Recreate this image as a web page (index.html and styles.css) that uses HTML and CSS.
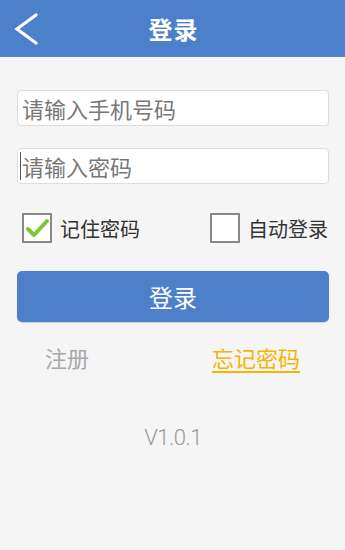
FILE: index.html
```html
<!DOCTYPE html>
<html lang="zh">
<head>
<meta charset="utf-8">
<link rel="stylesheet" href="styles.css">
</head>
<body>
<div class="app">
  <header class="bar">
    <svg class="back" width="28" height="34" viewBox="0 0 28 34">
      <path d="M24 3 L5 17 L24 31" fill="none" stroke="#fff" stroke-width="3.2" stroke-linecap="round" stroke-linejoin="miter"/>
    </svg>
    <h1 class="title">登录</h1>
  </header>
  <main class="content">
    <div class="field"><span class="ph">请输入手机号码</span></div>
    <div class="field"><span class="caret"></span><span class="ph">请输入密码</span></div>
    <div class="checks">
      <label class="check">
        <span class="box">
          <svg width="24" height="22" viewBox="0 0 24 22"><path d="M3 12 L9 18 L22 4" fill="none" stroke="#7cc832" stroke-width="4" stroke-linecap="round" stroke-linejoin="round"/></svg>
        </span>
        <span class="ctext">记住密码</span>
      </label>
      <label class="check">
        <span class="box"></span>
        <span class="ctext">自动登录</span>
      </label>
    </div>
    <button class="login">登录</button>
    <div class="links">
      <span class="reg">注册</span>
      <span class="forgot">忘记密码</span>
    </div>
    <div class="ver">V1.0.1</div>
  </main>
</div>
</body>
</html>
```
FILE: styles.css
```css
* { box-sizing: border-box; }
html, body { margin: 0; padding: 0; }
body {
  width: 345px;
  height: 550px;
  background: #f5f5f5;
  font-family: "Noto Sans CJK SC", "Noto Sans", sans-serif;
  overflow: hidden;
}
.bar {
  height: 57px;
  background: #4d80ca;
  display: flex;
  align-items: center;
  justify-content: center;
  position: relative;
  border-bottom: 1px solid #5a86c8;
}
.back {
  position: absolute;
  left: 12px;
  top: 12px;
}
.title {
  margin: 0;
  color: #fff;
  font-size: 24px;
  font-weight: 700;
  letter-spacing: 1px;
  margin-left: 2px;
}
.content {
  padding: 33px 16px 0 17px;
  display: flex;
  flex-direction: column;
}
.field {
  height: 36px;
  background: #fff;
  border: 1px solid #dcdcdc;
  border-radius: 4px;
  display: flex;
  align-items: center;
  padding-left: 4px;
  margin-bottom: 22px;
}
.field + .field { margin-bottom: 0; height: 36px; }
.ph {
  color: #777;
  font-size: 22px;
}
.caret {
  width: 1px;
  height: 28px;
  background: #555;
  margin-right: 1px;
  margin-left: -2px;
}
.checks {
  display: flex;
  justify-content: space-between;
  margin-top: 29px;
  padding-left: 5px;
  padding-right: 1px;
}
.check {
  display: flex;
  align-items: center;
  gap: 8px;
}
.box {
  width: 30px;
  height: 30px;
  border: 2px solid #888;
  background: #fff;
  display: flex;
  align-items: center;
  justify-content: center;
}
.ctext {
  font-size: 20px;
  color: #333;
}
.login {
  margin-top: 28px;
  height: 51px;
  border: none;
  border-radius: 5px;
  background: #4e80ca;
  color: #fff;
  font-family: inherit;
  font-size: 24px;
  box-shadow: 0 1px 1px rgba(0,0,0,0.15);
}
.links {
  display: flex;
  margin-top: 19px;
  padding-left: 28px;
  font-size: 22px;
}
.reg { color: #a8a8a8; width: 167px; }
.forgot {
  color: #f5b400;
  text-decoration: underline;
  text-underline-offset: 4px;
}
.ver {
  margin-top: 52px;
  text-align: center;
  color: #999;
  font-size: 22px;
  font-family: Roboto, sans-serif;
  font-weight: 300;
  letter-spacing: -0.5px;
}
```
